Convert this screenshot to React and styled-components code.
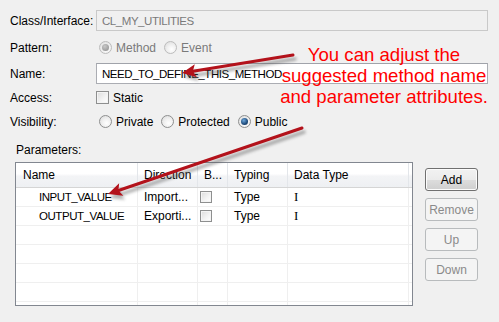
import React from 'react'
import styled, { createGlobalStyle } from 'styled-components'

const GlobalStyle = createGlobalStyle`
  html, body {
    margin:0;
    padding:0;
    background:#f0f0f0;
  }
`

const Page = styled.div`
  position:relative;
  width:499px;
  height:322px;
  overflow:hidden;
  background:#f0f0f0;
  font-family:"Liberation Sans", Arial, sans-serif;
  font-size:12px;
  color:#000;
`

// Segoe UI capitals are narrower than Arial's, so upper-case values get tightened
const Caps = styled.span`
  font-size:11.5px;
  letter-spacing:-0.45px;
`

const Form = styled.div`
  display:flex;
  flex-direction:column;
  padding:10px 11px 0 10px;
`

const Row = styled.div`
  display:grid;
  grid-template-columns:86px 1fr;
  align-items:center;
  height:21px;
  margin-top:${p => p.$mt || 0}px;
`

const Label = styled.span`
  white-space:nowrap;
`

const TextField = styled.div`
  box-sizing:border-box;
  height:21px;
  display:flex;
  align-items:center;
  padding-left:5px;
  border:1px solid ${p => (p.$disabled ? '#c9c9c9' : '#abadb3')};
  border-top-color:${p => (p.$disabled ? '#c9c9c9' : '#a0a3aa')};
  background:${p => (p.$disabled ? '#f0f0f0' : '#fff')};
  color:${p => (p.$disabled ? '#7a7a7a' : '#000')};
  white-space:nowrap;
  overflow:hidden;
`

const Options = styled.div`
  display:flex;
  align-items:center;
  padding-left:${p => p.$pad || 0}px;
`

const Option = styled.label`
  display:flex;
  align-items:center;
  gap:4px;
  margin-right:8px;
  color:${p => (p.$disabled ? '#7a7a7a' : '#000')};
`

const Radio = styled.span`
  position:relative;
  box-sizing:border-box;
  width:13px;
  height:13px;
  border-radius:50%;
  border:1px solid ${p => (p.$disabled ? '#bcbcbc' : '#8e8f8f')};
  background:radial-gradient(circle at 60% 65%, #ffffff 0%, #f0f0f0 45%, #d8d8d8 100%);

  &::after {
    content:'';
    display:${p => (p.$checked ? 'block' : 'none')};
    position:absolute;
    left:2px;
    top:2px;
    width:7px;
    height:7px;
    border-radius:50%;
    background:${p => (p.$disabled
      ? 'radial-gradient(circle at 40% 35%, #c8c8c8 0%, #8a8a8a 100%)'
      : 'radial-gradient(circle at 40% 35%, #6fa8dc 0%, #1d4a7a 60%, #0f2c52 100%)')};
  }
`

const Checkbox = styled.span`
  box-sizing:border-box;
  display:inline-block;
  width:${p => p.$size || 13}px;
  height:${p => p.$size || 13}px;
  border:1px solid #8e8f8f;
  background:linear-gradient(135deg, #dcdcdc 0%, #f4f4f4 60%, #ffffff 100%);
  box-shadow:inset 0 0 0 1px #f4f4f4;
`

const ParamsLabel = styled.div`
  margin:11px 0 0 16px;
  line-height:14px;
`

const ParamsArea = styled.div`
  display:flex;
  align-items:flex-start;
  padding-left:15px;
  margin-top:5px;
`

const Table = styled.div`
  box-sizing:border-box;
  width:398px;
  height:144px;
  border:1px solid #828790;
  background:#fff;
  overflow:hidden;
`

const cols = '122px 60px 30px 60px 121px 1fr'

const HeaderRow = styled.div`
  display:grid;
  grid-template-columns:${cols};
  height:25px;
  box-sizing:border-box;
  border-bottom:1px solid #d5d5d5;
  background:linear-gradient(#ffffff 0%, #ffffff 45%, #f3f4f6 55%, #eef0f3 100%);
`

const HeadCell = styled.div`
  display:flex;
  align-items:center;
  padding-left:${p => p.$pad || 6}px;
  border-right:1px solid #e3e6ea;
  white-space:nowrap;
  overflow:hidden;
`

const BodyRow = styled.div`
  display:grid;
  grid-template-columns:${cols};
  height:19px;
  box-sizing:border-box;
  border-bottom:1px solid #efefef;
`

const Cell = styled.div`
  display:flex;
  align-items:center;
  padding-left:${p => p.$pad ?? 6}px;
  border-right:1px solid #efefef;
  white-space:nowrap;
  overflow:hidden;
  font-family:${p => (p.$serif ? '"Liberation Serif", "Times New Roman", serif' : 'inherit')};
  font-size:${p => (p.$serif ? '13px' : 'inherit')};
`

const ButtonColumn = styled.div`
  display:flex;
  flex-direction:column;
  gap:7px;
  margin:6px 0 0 12px;
`

const Button = styled.button`
  box-sizing:border-box;
  width:53px;
  height:23px;
  padding:0;
  border-radius:3px;
  font-family:inherit;
  font-size:12px;
  border:1px solid ${p => (p.disabled ? '#b8bbbd' : '#707070')};
  color:${p => (p.disabled ? '#8a8a8a' : '#000')};
  background:${p => (p.disabled
    ? '#f4f4f4'
    : 'linear-gradient(#f2f2f2 0%, #ebebeb 50%, #dddddd 51%, #cfcfcf 100%)')};
  box-shadow:inset 0 0 0 1px ${p => (p.disabled ? '#f4f4f4' : '#fcfcfc')};
`

const Callout = styled.div`
  position:absolute;
  left:264px;
  top:44px;
  width:240px;
  text-align:center;
  color:#ff0000;
  font-family:"Liberation Sans", Arial, sans-serif;
  font-size:18.6px;
  line-height:21px;
  white-space:nowrap;
`

const ArrowLayer = styled.svg`
  position:absolute;
  left:0;
  top:0;
  pointer-events:none;
`

const params = [
  { name: 'INPUT_VALUE', dir: 'Import...', typing: 'Type', type: 'I' },
  { name: 'OUTPUT_VALUE', dir: 'Exporti...', typing: 'Type', type: 'I' },
  {}, {}, {}, {}, {},
]

const arrows = [
  { from: [293, 55], to: [182, 73] },
  { from: [302, 128], to: [108, 194] },
]

function arrowShape([x1, y1], [x2, y2]) {
  const dx = x2 - x1
  const dy = y2 - y1
  const len = Math.hypot(dx, dy)
  const ux = dx / len
  const uy = dy / len
  const L = 14
  const W = 6.5
  const bx = x2 - ux * L
  const by = y2 - uy * L
  const head = [
    [x2, y2],
    [bx - uy * W, by + ux * W],
    [bx + ux * 3, by + uy * 3],
    [bx + uy * W, by - ux * W],
  ].map(p => p.join(',')).join(' ')
  return { line: [x1, y1, bx + ux * 3, by + uy * 3], head }
}

const Arrows = () => (
  <ArrowLayer width='499' height='322' viewBox='0 0 499 322'>
    <defs>
      <filter id='shadow' x='-10%' y='-10%' width='120%' height='130%'>
        <feGaussianBlur stdDeviation='1.6' />
      </filter>
    </defs>
    {arrows.map((a, i) => {
      const s = arrowShape(a.from, a.to)
      return (
        <g key={i}>
          <g transform='translate(2 4)' filter='url(#shadow)' opacity='0.45'>
            <line x1={s.line[0]} y1={s.line[1]} x2={s.line[2]} y2={s.line[3]} stroke='#555' strokeWidth='3.5' strokeLinecap='round' />
            <polygon points={s.head} fill='#555' />
          </g>
          <line x1={s.line[0]} y1={s.line[1]} x2={s.line[2]} y2={s.line[3]} stroke='#b3121b' strokeWidth='3' strokeLinecap='round' />
          <polygon points={s.head} fill='#b3121b' />
        </g>
      )
    })}
  </ArrowLayer>
)

const App = () => {
  return (
    <Page>
      <GlobalStyle />
      <Form>
        <Row>
          <Label>Class/Interface:</Label>
          <TextField $disabled><Caps>CL_MY_UTILITIES</Caps></TextField>
        </Row>
        <Row $mt={6}>
          <Label>Pattern:</Label>
          <Options $pad={3}>
            <Option $disabled><Radio $checked $disabled />Method</Option>
            <Option $disabled><Radio $disabled />Event</Option>
          </Options>
        </Row>
        <Row $mt={5}>
          <Label>Name:</Label>
          <TextField><Caps>NEED_TO_DEFINE_THIS_METHOD</Caps></TextField>
        </Row>
        <Row $mt={3}>
          <Label>Access:</Label>
          <Options>
            <Option><Checkbox />Static</Option>
          </Options>
        </Row>
        <Row $mt={3}>
          <Label>Visibility:</Label>
          <Options $pad={3}>
            <Option><Radio />Private</Option>
            <Option><Radio />Protected</Option>
            <Option><Radio $checked />Public</Option>
          </Options>
        </Row>
      </Form>

      <ParamsLabel>Parameters:</ParamsLabel>
      <ParamsArea>
        <Table>
          <HeaderRow>
            <HeadCell $pad={7}>Name</HeadCell>
            <HeadCell>Direction</HeadCell>
            <HeadCell>B...</HeadCell>
            <HeadCell>Typing</HeadCell>
            <HeadCell>Data Type</HeadCell>
            <HeadCell />
          </HeaderRow>
          {params.map((p, i) => (
            <BodyRow key={i}>
              <Cell $pad={23}>{p.name && <Caps>{p.name}</Caps>}</Cell>
              <Cell>{p.dir}</Cell>
              <Cell $pad={2}>{p.name && <Checkbox $size={12} />}</Cell>
              <Cell>{p.typing}</Cell>
              <Cell $serif>{p.type}</Cell>
              <Cell />
            </BodyRow>
          ))}
        </Table>
        <ButtonColumn>
          <Button>Add</Button>
          <Button disabled>Remove</Button>
          <Button disabled>Up</Button>
          <Button disabled>Down</Button>
        </ButtonColumn>
      </ParamsArea>

      <Callout>
        You can adjust the<br />
        suggested method name<br />
        and parameter attributes.
      </Callout>
      <Arrows />
    </Page>
  )
}

export default App
